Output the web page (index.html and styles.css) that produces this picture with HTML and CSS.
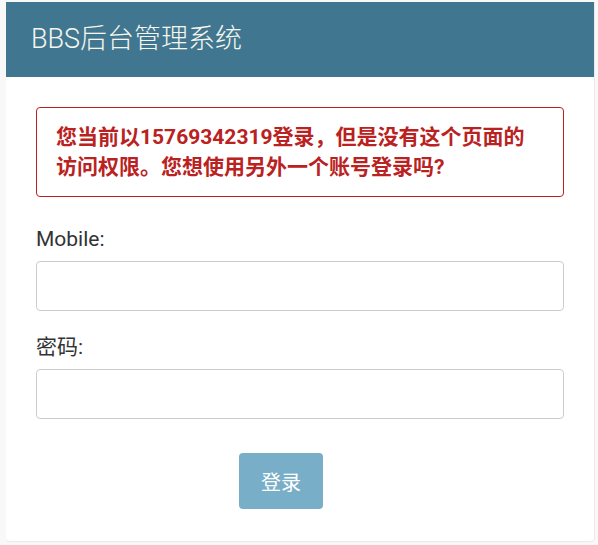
FILE: index.html
```html
<!DOCTYPE html>
<html lang="zh-CN">
<head>
<meta charset="utf-8">
<title>BBS后台管理系统</title>
<link rel="stylesheet" href="styles.css">
</head>
<body>
<div class="login">
  <div class="header">
    <h1 class="brand">BBS后台管理系统</h1>
  </div>
  <div class="content">
    <p class="errornote">您当前以15769342319登录，但是没有这个页面的访问权限。您想使用另外一个账号登录吗?</p>
    <form class="form">
      <div class="row">
        <label class="label" for="mobile">Mobile:</label>
        <input class="input" id="mobile" type="text">
      </div>
      <div class="row">
        <label class="label" for="pwd">密码:</label>
        <input class="input" id="pwd" type="password">
      </div>
      <div class="submit-row">
        <button class="btn" type="button">登录</button>
      </div>
    </form>
  </div>
</div>
</body>
</html>
```
FILE: styles.css
```css
html, body {
  margin: 0;
  padding: 0;
}
body {
  background: #f8f8f8;
  padding: 2px 0 0 6px;
  font-family: Roboto, "Noto Sans CJK SC", sans-serif;
  color: #333;
}
.login {
  width: 589px;
  box-sizing: border-box;
  background: #fff;
  border: 1px solid #eaeaea;
  border-top: 0;
  border-left: 0;
  border-radius: 0 0 4px 4px;
  overflow: hidden;
}
.header {
  height: 75px;
  background: #417690;
  display: flex;
  align-items: center;
  padding-left: 25px;
}
.brand {
  margin: 0;
  font-weight: 300;
  font-size: 27px;
  color: #f6f6ee;
  line-height: 1;
}
.content {
  padding: 0 30px 32px 30px;
}
.errornote {
  margin: 30px 0 0;
  border: 1px solid #ba2121;
  border-radius: 4px;
  padding: 14px 25px 14px 19px;
  color: #ba2121;
  font-weight: bold;
  font-size: 21px;
  line-height: 30px;
}
.form {
  margin: 0;
}
.row {
  margin-top: 27px;
}
.row + .row {
  margin-top: 21px;
}
.label {
  display: block;
  font-size: 21px;
  line-height: 30px;
  margin-bottom: 7px;
  color: #333;
}
.input {
  display: block;
  width: 100%;
  height: 50px;
  box-sizing: border-box;
  border: 1px solid #ccc;
  border-radius: 4px;
  margin: 0;
  padding: 6px 10px;
  font-size: 20px;
  font-family: inherit;
}
.submit-row {
  margin-top: 34px;
  padding-left: 203px;
}
.btn {
  width: 84px;
  height: 56px;
  border: 0;
  border-radius: 4px;
  background: #79aec8;
  color: #fff;
  font-family: inherit;
  font-size: 20px;
  padding: 0;
  margin: 0;
}
```
